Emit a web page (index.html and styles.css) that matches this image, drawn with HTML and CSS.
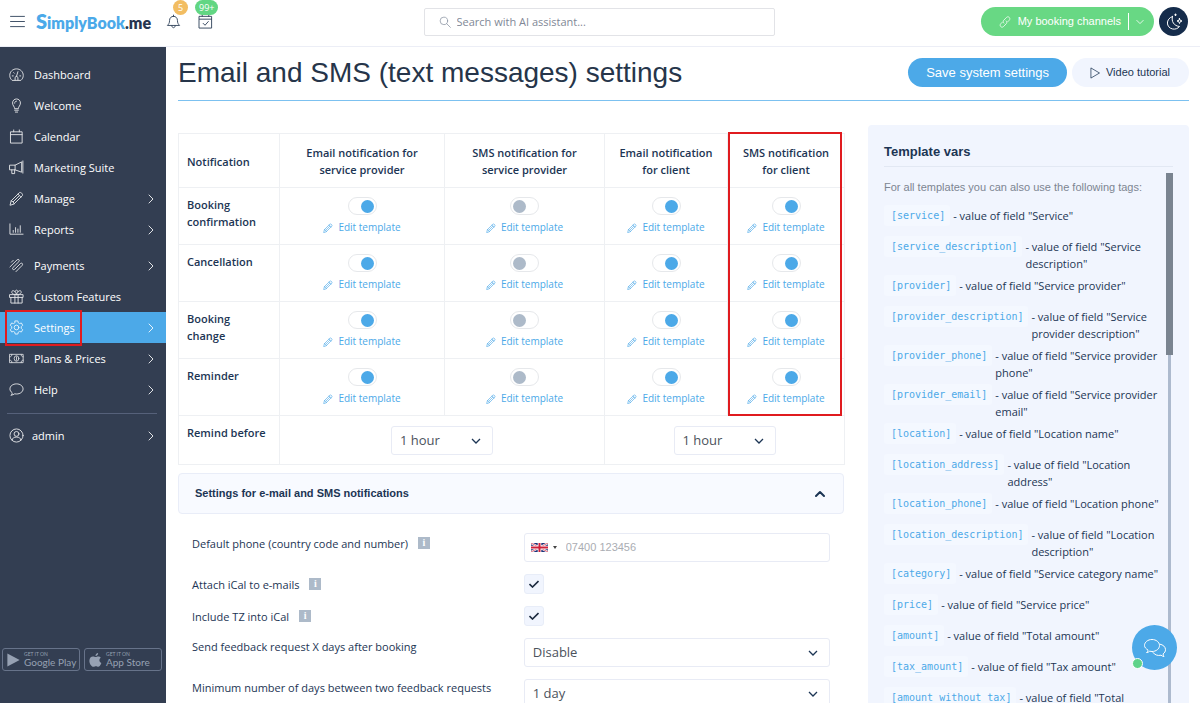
FILE: index.html
```
<!DOCTYPE html>
<html lang="en">
<head>
    <meta charset="UTF-8">
    <meta name="viewport" content="width=device-width, initial-scale=1.0">
    <title>Email and SMS (text messages) settings</title>
    <link rel="stylesheet" href="styles.css">
</head>
<body>
    <svg class="icon-defs" aria-hidden="true">
        <symbol id="i-menu" viewBox="0 0 16 14"><path d="M0.5 1.5h15M0.5 7h15M0.5 12.5h15"/></symbol>
        <symbol id="i-bell" viewBox="0 0 16 16"><path d="M8 1.2v1.2M8 2.4c-2.6 0-4.2 2-4.2 4.4 0 3-1 4-2.3 5.4h13c-1.3-1.4-2.3-2.4-2.3-5.4C12.2 4.4 10.6 2.4 8 2.4zM6.2 12.4c0 1.3.7 2.2 1.8 2.2s1.8-.9 1.8-2.2"/></symbol>
        <symbol id="i-check-cal" viewBox="0 0 16 16"><path d="M1.5 2.5h13v12.500h-13zM1.5 5.5h13M4.500 .5v2M11.500 .5v2M5.500 10l2 2 3.500-4"/></symbol>
        <symbol id="i-search" viewBox="0 0 16 16"><circle cx="6.500" cy="6.500" r="5"/><path d="M10.200 10.200l5 5"/></symbol>
        <symbol id="i-link" viewBox="0 0 16 16"><path d="M6.500 9.500c-1.300-1.300-1.200-2.800-.2-3.800l3.700-3.800c1.100-1.100 2.700-1.100 3.700 0s1 2.600 0 3.700l-2.200 2.200M9.500 6.500c1.300 1.300 1.200 2.800.2 3.800L6 14.100c-1.100 1.100-2.700 1.100-3.700 0s-1-2.600 0-3.700l2.200-2.200"/></symbol>
        <symbol id="i-moon" viewBox="0 0 20 20"><path d="M8.500 4.500c-1.500 4.800 1.500 9.500 7 10-1.600 2-4.200 3-6.800 2.500-6.800-1.300-7.300-10.300-.2-12.500zM15.500 6.500l.7 1.800 1.800.7-1.800.7-.7 1.800-.7-1.800L13 9l1.800-.7zM11.500 2v1.600M10.700 2.800h1.600"/></symbol>
        <symbol id="i-play" viewBox="0 0 16 16"><path d="M3 1.500l11 6.500-11 6.500z"/></symbol>
        <symbol id="i-right" viewBox="0 0 8 10"><path d="M2 1l4 4-4 4"/></symbol>
        <symbol id="i-down" viewBox="0 0 10 8"><path d="M1 2l4 4 4-4"/></symbol>
        <symbol id="i-up" viewBox="0 0 10 8"><path d="M1 6l4-4 4 4"/></symbol>
        <symbol id="i-dashboard" viewBox="0 0 16 16"><path d="M3 14C1.600 12.800.8 11 .8 9c0-4 3.200-7 7.200-7s7.200 3 7.200 7c0 2-.8 3.800-2.200 5zM8 10l1.500-5M3.500 9.500h1M5 6l.6.6M11.500 9.500h1M6.500 14v-2.500c0-2 3-2 3 0V14"/></symbol>
        <symbol id="i-bulb" viewBox="0 0 16 16"><path d="M6 11c0-2-2.200-2.800-2.200-5.700C3.800 2.800 5.700 1 8 1s4.200 1.800 4.200 4.300C12.200 8.200 10 9 10 11zM6 13h4M6.800 15h2.400M6 5.500C6 4.200 6.800 3.300 8 3.300"/></symbol>
        <symbol id="i-calendar" viewBox="0 0 16 16"><path d="M2 3h12v12H2zM2 6h12M5 1v2M11 1v2"/></symbol>
        <symbol id="i-horn" viewBox="0 0 16 16"><path d="M1 5.500h5.500L13.500 2v11l-7-2.500H1zM6.500 5.500v5M3 10.500v4h3v-4M14.800 1v13"/></symbol>
        <symbol id="i-pencil" viewBox="0 0 16 16"><path d="M1.200 14.800l1.100-4.300 8.700-8.700c1.300-1.300 4.500 1.800 3.200 3.200l-8.700 8.700zM9.500 3.300l3.200 3.200M2.300 10.500c1.600.3 2.900 1.600 3.200 3.200M11 5L4.500 11.500"/></symbol>
        <symbol id="i-chart" viewBox="0 0 16 16"><path d="M1 2v11h14M4.500 11V9M7 11V6M9.500 11V7.500M12 11V4"/></symbol>
        <symbol id="i-payments" viewBox="0 0 16 16"><path d="M1 9.500L8.600 2c1.500-1.400 3.300.4 1.900 1.900L4.200 10.200c-1.300 1.400.4 3.100 1.900 1.800l6-6c1.500-1.400 3.300.4 1.900 1.900L7.500 14.500M4.500 2.500L2.500 4.500"/></symbol>
        <symbol id="i-gift" viewBox="0 0 16 16"><path d="M1 6h14v3H1zM2 9v6h12V9M6.300 6v9M9.700 6v9M8 6C6 6 2.500 5.500 3 3s4.300-1 5 3c.7-4 4.500-5.500 5-3S10 6 8 6zM6.500 3c0-2.500 3-2.500 3 0"/></symbol>
        <symbol id="i-gear" viewBox="0 0 16 16"><circle cx="8" cy="8" r="2.500"/><path d="M6.600 1h2.800l.5 2 1.300.8 2-.6 1.400 2.400-1.500 1.500v1.800l1.500 1.500-1.400 2.400-2-.6-1.300.8-.5 2H6.600l-.5-2-1.300-.8-2 .6-1.400-2.400 1.500-1.500V7.100L1.400 5.600l1.400-2.400 2 .6L6.100 3z"/></symbol>
        <symbol id="i-cash" viewBox="0 0 18 14"><path d="M1 2h16v10H1zM1 5c1.500 0 2.500-1 2.500-3M17 5c-1.500 0-2.500-1-2.500-3M1 9c1.500 0 2.500 1 2.500 3M17 9c-1.500 0-2.500 1-2.500 3M9 5v4"/><ellipse cx="9" cy="7" rx="2.800" ry="3.300"/></symbol>
        <symbol id="i-help" viewBox="0 0 16 16"><path d="M2.500 14c.8-.8 1-1.700.8-2.600C1.800 10.300 1 8.900 1 7.400 1 4.300 4.100 2 8 2s7 2.300 7 5.400-3.100 5.400-7 5.400c-.7 0-1.400-.1-2-.2-1 .8-2.100 1.300-3.500 1.400z"/></symbol>
        <symbol id="i-user" viewBox="0 0 16 16"><circle cx="8" cy="8" r="7"/><circle cx="8" cy="6.300" r="2.600"/><path d="M3.300 13c.4-2.500 2-3.300 4.700-3.300s4.300.8 4.700 3.300"/></symbol>
        <symbol id="i-chat" viewBox="0 0 24 20"><path d="M4 14.500c.8-.8 1-1.600.9-2.600C3 10.800 1.500 9.300 1.500 7.500c0-3.300 3.300-6 7.500-6s7.500 2.700 7.500 6-3.300 6-7.500 6c-.8 0-1.600-.1-2.300-.3-.8.7-1.600 1.200-2.700 1.300zM17 6.200c3.200.5 5.500 2.700 5.500 5.500 0 1.700-.9 3.200-2.400 4.200 0 1 .3 1.800.9 2.600-1.200-.1-2.200-.6-3-1.300-3.200.8-6.500-.3-8-2.700"/></symbol>
    </svg>

    <header class="topbar">
        <div class="topbar-left">
            <button class="icon-button" aria-label="Menu"><svg class="icon menu-icon"><use href="#i-menu"/></svg></button>
            <a class="logo" href="#"><span class="logo-blue"><span class="logo-s">S</span>implyBook</span>.me</a>
            <button class="icon-button" aria-label="Notifications"><svg class="icon"><use href="#i-bell"/></svg><span class="badge badge-orange">5</span></button>
            <button class="icon-button" aria-label="Bookings"><svg class="icon"><use href="#i-check-cal"/></svg><span class="badge badge-green">99+</span></button>
        </div>
        <label class="search">
            <svg class="icon search-icon"><use href="#i-search"/></svg>
            <input type="text" placeholder="Search with AI assistant..." aria-label="Search">
        </label>
        <div class="topbar-right">
            <button class="channels"><svg class="icon small-icon"><use href="#i-link"/></svg><span class="channels-text">My booking channels</span><svg class="icon arrow"><use href="#i-down"/></svg></button>
            <button class="theme" aria-label="Dark mode"><svg class="icon"><use href="#i-moon"/></svg></button>
        </div>
    </header>

    <div class="layout">
        <aside class="sidebar">
            <nav>
                <ul class="menu">
                    <li><a href="#"><svg class="icon"><use href="#i-dashboard"/></svg>Dashboard</a></li>
                    <li><a href="#"><svg class="icon"><use href="#i-bulb"/></svg>Welcome</a></li>
                    <li><a href="#"><svg class="icon"><use href="#i-calendar"/></svg>Calendar</a></li>
                    <li><a href="#"><svg class="icon"><use href="#i-horn"/></svg>Marketing Suite</a></li>
                    <li><a href="#"><svg class="icon"><use href="#i-pencil"/></svg>Manage<svg class="icon arrow"><use href="#i-right"/></svg></a></li>
                    <li><a href="#"><svg class="icon"><use href="#i-chart"/></svg>Reports<svg class="icon arrow"><use href="#i-right"/></svg></a></li>
                </ul>
                <ul class="menu menu-second">
                    <li><a href="#"><svg class="icon"><use href="#i-payments"/></svg>Payments<svg class="icon arrow"><use href="#i-right"/></svg></a></li>
                    <li><a href="#"><svg class="icon"><use href="#i-gift"/></svg>Custom Features</a></li>
                    <li class="active"><a href="#"><svg class="icon"><use href="#i-gear"/></svg>Settings<svg class="icon arrow"><use href="#i-right"/></svg></a><span class="mark"></span></li>
                    <li><a href="#"><svg class="icon"><use href="#i-cash"/></svg>Plans &amp; Prices<svg class="icon arrow"><use href="#i-right"/></svg></a></li>
                    <li><a href="#"><svg class="icon"><use href="#i-help"/></svg>Help<svg class="icon arrow"><use href="#i-right"/></svg></a></li>
                </ul>
                <ul class="menu menu-user">
                    <li><a href="#"><svg class="icon"><use href="#i-user"/></svg>admin<svg class="icon arrow"><use href="#i-right"/></svg></a></li>
                </ul>
            </nav>
            <div class="stores">
                <a class="store" href="#">
                    <svg class="store-icon" viewBox="0 0 14 16"><path d="M0 0.500L14 8 0 15.500z"/></svg>
                    <span class="store-text"><small>GET IT ON</small>Google Play</span>
                </a>
                <a class="store" href="#">
                    <svg class="store-icon" viewBox="0 0 14 16"><path d="M10 0c.1 1.800-1.300 3.500-3 3.500C6.800 1.800 8.300.2 10 0zM7.200 4.700c.8 0 1.600-.8 3-.8 1.100 0 2.200.6 2.900 1.600-2.500 1.500-2 5 .6 6-.9 2.300-2.200 4.300-3.600 4.300-1 0-1.400-.6-2.600-.6s-1.700.6-2.600.6C2.700 15.800 0 12.600 0 8.800c0-3.200 2-4.900 4-4.900 1.300 0 2.400.8 3.200.8z"/></svg>
                    <span class="store-text"><small>GET IT ON</small>App Store</span>
                </a>
            </div>
        </aside>

        <main class="content">
            <div class="page-head">
                <h1>Email and SMS (text messages) settings</h1>
                <button class="btn btn-save">Save system settings</button>
                <button class="btn btn-video"><svg class="icon small-icon"><use href="#i-play"/></svg>Video tutorial</button>
            </div>

            <div class="columns">
                <section class="settings">
                    <div class="table-wrap">
                        <table>
                            <colgroup>
                                <col class="c-name"><col class="c-email-p"><col class="c-sms-p"><col class="c-email-c"><col class="c-sms-c">
                            </colgroup>
                            <thead>
                                <tr>
                                    <th scope="col">Notification</th>
                                    <th scope="col">Email notification for service provider</th>
                                    <th scope="col">SMS notification for service provider</th>
                                    <th scope="col">Email notification for client</th>
                                    <th scope="col">SMS notification for client</th>
                                </tr>
                            </thead>
                            <tbody>
                                <tr>
                                    <th scope="row">Booking confirmation</th>
                                    <td><input class="toggle" type="checkbox" aria-label="Booking confirmation, email for provider" checked><a class="edit" href="#"><svg class="icon"><use href="#i-pencil"/></svg>Edit template</a></td>
                                    <td><input class="toggle" type="checkbox" aria-label="Booking confirmation, SMS for provider"><a class="edit" href="#"><svg class="icon"><use href="#i-pencil"/></svg>Edit template</a></td>
                                    <td><input class="toggle" type="checkbox" aria-label="Booking confirmation, email for client" checked><a class="edit" href="#"><svg class="icon"><use href="#i-pencil"/></svg>Edit template</a></td>
                                    <td><input class="toggle" type="checkbox" aria-label="Booking confirmation, SMS for client" checked><a class="edit" href="#"><svg class="icon"><use href="#i-pencil"/></svg>Edit template</a></td>
                                </tr>
                                <tr>
                                    <th scope="row">Cancellation</th>
                                    <td><input class="toggle" type="checkbox" aria-label="Cancellation, email for provider" checked><a class="edit" href="#"><svg class="icon"><use href="#i-pencil"/></svg>Edit template</a></td>
                                    <td><input class="toggle" type="checkbox" aria-label="Cancellation, SMS for provider"><a class="edit" href="#"><svg class="icon"><use href="#i-pencil"/></svg>Edit template</a></td>
                                    <td><input class="toggle" type="checkbox" aria-label="Cancellation, email for client" checked><a class="edit" href="#"><svg class="icon"><use href="#i-pencil"/></svg>Edit template</a></td>
                                    <td><input class="toggle" type="checkbox" aria-label="Cancellation, SMS for client" checked><a class="edit" href="#"><svg class="icon"><use href="#i-pencil"/></svg>Edit template</a></td>
                                </tr>
                                <tr>
                                    <th scope="row">Booking<br>change</th>
                                    <td><input class="toggle" type="checkbox" aria-label="Booking change, email for provider" checked><a class="edit" href="#"><svg class="icon"><use href="#i-pencil"/></svg>Edit template</a></td>
                                    <td><input class="toggle" type="checkbox" aria-label="Booking change, SMS for provider"><a class="edit" href="#"><svg class="icon"><use href="#i-pencil"/></svg>Edit template</a></td>
                                    <td><input class="toggle" type="checkbox" aria-label="Booking change, email for client" checked><a class="edit" href="#"><svg class="icon"><use href="#i-pencil"/></svg>Edit template</a></td>
                                    <td><input class="toggle" type="checkbox" aria-label="Booking change, SMS for client" checked><a class="edit" href="#"><svg class="icon"><use href="#i-pencil"/></svg>Edit template</a></td>
                                </tr>
                                <tr>
                                    <th scope="row">Reminder</th>
                                    <td><input class="toggle" type="checkbox" aria-label="Reminder, email for provider" checked><a class="edit" href="#"><svg class="icon"><use href="#i-pencil"/></svg>Edit template</a></td>
                                    <td><input class="toggle" type="checkbox" aria-label="Reminder, SMS for provider"><a class="edit" href="#"><svg class="icon"><use href="#i-pencil"/></svg>Edit template</a></td>
                                    <td><input class="toggle" type="checkbox" aria-label="Reminder, email for client" checked><a class="edit" href="#"><svg class="icon"><use href="#i-pencil"/></svg>Edit template</a></td>
                                    <td><input class="toggle" type="checkbox" aria-label="Reminder, SMS for client" checked><a class="edit" href="#"><svg class="icon"><use href="#i-pencil"/></svg>Edit template</a></td>
                                </tr>
                                <tr>
                                    <th scope="row">Remind before</th>
                                    <td colspan="2"><select class="select select-small" aria-label="Remind provider before"><option>1 hour</option></select></td>
                                    <td colspan="2"><select class="select select-small" aria-label="Remind client before"><option>1 hour</option></select></td>
                                </tr>
                            </tbody>
                        </table>
                        <span class="mark"></span>
                    </div>

                    <button class="accordion">Settings for e-mail and SMS notifications<svg class="icon arrow"><use href="#i-up"/></svg></button>

                    <form class="form">
                        <label class="info-label" for="phone">Default phone (country code and number) <span class="info">i</span></label>
                        <div class="phone">
                            <button type="button" class="country" aria-label="United Kingdom">
                                <svg class="flag" viewBox="0 0 17 9">
                                    <path fill="#1d3278" d="M0 0h17v9H0z"/>
                                    <path stroke="#fff" stroke-width="2" d="M0 0l17 9M17 0L0 9"/>
                                    <path stroke="#d0203a" stroke-width="0.700" d="M0 0l17 9M17 0L0 9"/>
                                    <path stroke="#fff" stroke-width="3.600" d="M8.500 0v9M0 4.500h17"/>
                                    <path stroke="#d0203a" stroke-width="2" d="M8.500 0v9M0 4.500h17"/>
                                </svg>
                                <span class="caret"></span>
                            </button>
                            <input type="tel" id="phone" placeholder="07400 123456">
                        </div>
                        <label class="info-label" for="ical">Attach iCal to e-mails <span class="info">i</span></label>
                        <input class="check" type="checkbox" id="ical" checked>
                        <label class="info-label" for="tz">Include TZ into iCal <span class="info">i</span></label>
                        <input class="check" type="checkbox" id="tz" checked>
                        <label for="feedback">Send feedback request X days after booking</label>
                        <select class="select" id="feedback"><option>Disable</option></select>
                        <label for="days">Minimum number of days between two feedback requests</label>
                        <select class="select" id="days"><option>1 day</option></select>
                    </form>
                </section>

                <aside class="vars">
                    <h2>Template vars</h2>
                    <div class="vars-body">
                        <div class="vars-scroll">
                            <p>For all templates you can also use the following tags:</p>
                            <ul>
                                <li><code>[service]</code><span>- value of field "Service"</span></li>
                                <li><code>[service_description]</code><span>- value of field "Service description"</span></li>
                                <li><code>[provider]</code><span>- value of field "Service provider"</span></li>
                                <li><code>[provider_description]</code><span>- value of field "Service provider description"</span></li>
                                <li><code>[provider_phone]</code><span>- value of field "Service provider phone"</span></li>
                                <li><code>[provider_email]</code><span>- value of field "Service provider email"</span></li>
                                <li><code>[location]</code><span>- value of field "Location name"</span></li>
                                <li><code>[location_address]</code><span>- value of field "Location address"</span></li>
                                <li><code>[location_phone]</code><span>- value of field "Location phone"</span></li>
                                <li><code>[location_description]</code><span>- value of field "Location description"</span></li>
                                <li><code>[category]</code><span>- value of field "Service category name"</span></li>
                                <li><code>[price]</code><span>- value of field "Service price"</span></li>
                                <li><code>[amount]</code><span>- value of field "Total amount"</span></li>
                                <li><code>[tax_amount]</code><span>- value of field "Tax amount"</span></li>
                                <li><code>[amount_without_tax]</code><span>- value of field "Total</span></li>
                            </ul>
                        </div>
                        <div class="scrollbar"><div class="thumb"></div></div>
                    </div>
                </aside>
            </div>
        </main>
    </div>

    <button class="chat" aria-label="Chat"><svg class="icon"><use href="#i-chat"/></svg><span class="online"></span></button>
</body>
</html>
```
FILE: styles.css
```
* {
    box-sizing: border-box;
}
body {
    display: flex;
    flex-direction: column;
    height: 100vh;
    margin: 0;
    overflow: hidden;
    font-family: "Open Sans", sans-serif;
    font-size: 11px;
    line-height: 17px;
    color: #1c3554;
    background: #fff;
}
button, input, select {
    font: inherit;
    color: inherit;
}
button {
    padding: 0;
    border: none;
    background: none;
    cursor: pointer;
}
a {
    color: inherit;
    text-decoration: none;
}
ul {
    margin: 0;
    padding: 0;
    list-style: none;
}
.icon-defs {
    position: absolute;
    width: 0;
    height: 0;
}
.icon {
    flex: none;
    width: 15px;
    height: 15px;
    fill: none;
    stroke: currentColor;
    stroke-width: 1;
    stroke-linecap: round;
    stroke-linejoin: round;
}
.icon.small-icon {
    width: 12px;
    height: 12px;
}
.icon.arrow {
    width: 10px;
    height: 10px;
    stroke-width: 2;
}
.mark {
    position: absolute;
    border: 2px solid #e01b1f;
    pointer-events: none;
}

/* top bar */
.topbar {
    display: flex;
    flex: none;
    align-items: center;
    height: 47px;
    padding: 0 12px 3px 10px;
    border-bottom: 1px solid #eceef6;
}
.topbar-left, .topbar-right {
    display: flex;
    flex: 1;
    align-items: center;
}
.topbar-right {
    justify-content: flex-end;
    gap: 5px;
}
.icon-button {
    position: relative;
    display: flex;
    color: #34465e;
}
.icon-button + .icon-button {
    margin-left: 17px;
}
.icon.menu-icon {
    height: 13px;
}
.logo {
    margin: 0 15px 0 11px;
    font-family: Lato, sans-serif;
    font-size: 16px;
    font-weight: 800;
    line-height: 22px;
    color: #26354f;
}
.logo-blue {
    color: #4ba9e9;
}
.logo-s {
    font-size: 20px;
}
.badge {
    position: absolute;
    left: 7px;
    bottom: 14px;
    min-width: 15px;
    height: 15px;
    border-radius: 8px;
    font-size: 9px;
    line-height: 15px;
    color: #fff;
    text-align: center;
}
.badge-orange {
    background: #f2bd62;
}
.badge-green {
    left: -3px;
    padding: 0 4px;
    background: #62d683;
}
.search {
    display: flex;
    flex: 0 1 351px;
    align-items: center;
    gap: 6px;
    height: 28px;
    padding: 0 14px;
    border: 1px solid #e2e3e7;
    border-radius: 2px;
    color: #8a93a1;
}
.icon.search-icon {
    width: 12px;
    height: 12px;
}
.search input {
    flex: 1;
    min-width: 0;
    padding: 0;
    border: none;
    outline: none;
    background: none;
}
.search input::placeholder {
    color: #7f8896;
}
.channels {
    display: flex;
    align-items: center;
    height: 29px;
    padding: 0 10px 0 18px;
    border-radius: 15px;
    background: #68d884;
    font-family: "Liberation Sans", sans-serif;
    color: #fff;
}
.channels-text {
    margin-left: 7px;
    margin-right: 7px;
    padding-right: 7px;
    border-right: 1px solid #fff;
}
.channels .arrow {
    width: 8px;
    stroke-width: 1;
}
.theme {
    display: flex;
    align-items: center;
    justify-content: center;
    width: 29px;
    height: 29px;
    border-radius: 50%;
    background: #152c4b;
    color: #fff;
}
.theme .icon {
    width: 20px;
    height: 20px;
}

/* sidebar */
.layout {
    display: flex;
    flex: 1;
    min-height: 0;
}
.sidebar {
    display: flex;
    flex: none;
    flex-direction: column;
    justify-content: space-between;
    width: 166px;
    padding: 12px 0 32px;
    background: #333e52;
    color: #fff;
}
.menu li {
    position: relative;
}
.menu a {
    display: flex;
    align-items: center;
    gap: 10px;
    padding: 7px 10px 7px 9px;
}
.menu .icon {
    opacity: 0.85;
}
.menu .arrow {
    margin-left: auto;
    stroke-width: 1;
}
.menu-second {
    margin-top: 5px;
}
.menu .active {
    background: #4ca9e8;
}
.menu .mark {
    top: -2px;
    left: 5px;
    width: 77px;
    height: 36px;
}
.menu-user {
    margin: 8px 9px 0 7px;
    padding-top: 6px;
    border-top: 1px solid #56617a;
}
.menu-user a {
    gap: 8px;
    padding: 7px 1px 7px 2px;
}
.stores {
    display: flex;
    gap: 4px;
    padding: 0 4px 0 2px;
}
.store {
    display: flex;
    flex: 1;
    align-items: center;
    gap: 4px;
    height: 23px;
    padding-left: 4px;
    border: 1px solid #67738a;
    border-radius: 3px;
    color: #96a1b3;
}
.store-icon {
    width: 13px;
    height: 14px;
    fill: #96a1b3;
}
.store-text {
    font-family: Lato, sans-serif;
    font-size: 10px;
    line-height: 11px;
    white-space: nowrap;
}
.store-text small {
    display: block;
    font-size: 5px;
    line-height: 6px;
}

/* page */
.content {
    flex: 1;
    min-width: 0;
    padding: 0 11px 0 12px;
    overflow: hidden;
}
.page-head {
    display: flex;
    align-items: center;
    height: 54px;
    padding-bottom: 2px;
    border-bottom: 1px solid #7cc1f0;
}
h1 {
    flex: 1;
    margin: 0;
    font-family: "Liberation Sans", sans-serif;
    font-size: 28px;
    font-weight: normal;
    line-height: 32px;
    color: #26354a;
    white-space: nowrap;
}
.btn {
    display: flex;
    align-items: center;
    gap: 5px;
    height: 29px;
    border-radius: 15px;
    font-family: "Liberation Sans", sans-serif;
}
.btn-save {
    padding: 0 18px;
    background: #4ca9e8;
    font-size: 13px;
    color: #fff;
}
.btn-video {
    margin-left: 5px;
    padding: 0 19px 0 17px;
    background: #f1f5fe;
}
.columns {
    display: grid;
    grid-template-columns: minmax(0, 1fr) 321px;
    gap: 24px;
    padding-top: 24px;
}
.settings {
    padding-top: 8px;
}
.table-wrap {
    position: relative;
}
.table-wrap .mark {
    top: -1px;
    right: 2px;
    bottom: 49px;
    width: 114px;
}
table {
    width: 100%;
    table-layout: fixed;
    border-collapse: collapse;
}
.c-name {
    width: 101px;
}
.c-email-p {
    width: 165px;
}
.c-sms-p {
    width: 160px;
}
.c-email-c {
    width: 123px;
}
.c-sms-c {
    width: 117px;
}
th, td {
    padding: 9px 8px 8px;
    border: 1px solid #eef0f3;
    font-weight: 600;
    text-align: center;
    vertical-align: top;
}
tbody th {
    padding-top: 8px;
}
thead th {
    padding: 10px 8px 9px;
    vertical-align: middle;
}
thead th:nth-child(2), thead th:nth-child(3) {
    padding-left: 20px;
    padding-right: 20px;
}
th:first-child {
    text-align: left;
}
td {
    font-weight: normal;
}
.toggle {
    display: block;
    width: 29px;
    height: 18px;
    margin: 0 auto 4px;
    padding: 2px;
    border: 1px solid #e6e8eb;
    border-radius: 9px;
    background: #fff;
    appearance: none;
}
.toggle::before {
    content: "";
    display: block;
    width: 13px;
    height: 13px;
    border-radius: 50%;
    background: #adbac9;
}
.toggle:checked::before {
    margin-left: 10px;
    background: #4ca9e8;
}
.edit {
    display: flex;
    align-items: center;
    justify-content: center;
    gap: 5px;
    font-size: 10px;
    color: #4ca9e8;
}
.edit .icon {
    width: 10px;
    height: 10px;
}
.select {
    display: block;
    width: 100%;
    height: 29px;
    padding: 0 8px;
    border: 1px solid #e8ebf5;
    border-radius: 3px;
    background: #fff url("data:image/svg+xml,%3Csvg xmlns='http://www.w3.org/2000/svg' viewBox='0 0 10 8' fill='none' stroke='%231c3554' stroke-width='1.300'%3E%3Cpath d='M1 2l4 4 4-4'/%3E%3C/svg%3E") no-repeat right 11px center / 10px 8px;
    font-size: 13px;
    color: #4b525c;
    appearance: none;
}
.select-small {
    width: 102px;
    margin: 1px auto;
}
.accordion {
    display: flex;
    align-items: center;
    justify-content: space-between;
    width: 100%;
    height: 41px;
    margin-top: 8px;
    padding: 0 18px 0 16px;
    border: 1px solid #e9edf8;
    border-radius: 4px;
    background: #f8faff;
    font-family: "Liberation Sans", sans-serif;
    font-weight: bold;
}
.form {
    display: grid;
    grid-template-columns: 52fr 48fr;
    align-items: start;
    gap: 12px 0;
    padding: 19px 14px;
}
.info-label {
    display: flex;
    align-items: center;
    height: 20px;
}
.info {
    width: 12px;
    height: 12px;
    margin-left: 10px;
    background: #adbac9;
    font-family: "Liberation Serif", serif;
    font-size: 10px;
    font-weight: bold;
    line-height: 12px;
    color: #fff;
    text-align: center;
}
.phone {
    display: flex;
    align-items: center;
    height: 29px;
    border: 1px solid #e8ebf5;
    border-radius: 3px;
}
.country {
    display: flex;
    align-items: center;
    gap: 5px;
    padding: 0 9px 0 6px;
}
.flag {
    width: 17px;
    height: 9px;
}
.caret {
    border: 2px solid transparent;
    border-top: 3px solid #444;
    border-bottom: 0;
}
.phone input {
    flex: 1;
    min-width: 0;
    padding: 0;
    border: none;
    outline: none;
    font-family: "Liberation Sans", sans-serif;
}
.phone input::placeholder {
    color: #aaadb3;
}
.check {
    width: 20px;
    height: 20px;
    margin: 0;
    border: 1px solid #e8edf8;
    border-radius: 3px;
    background: #f1f5fe;
    appearance: none;
}
.check:checked {
    background: #f1f5fe url("data:image/svg+xml,%3Csvg xmlns='http://www.w3.org/2000/svg' viewBox='0 0 10 8' fill='none' stroke='%231c2b40' stroke-width='1.600'%3E%3Cpath d='M0.500 4l3 3 6-6'/%3E%3C/svg%3E") no-repeat center / 10px 8px;
}

/* template vars */
.vars {
    height: 100vh;
    padding: 16px;
    border-radius: 4px;
    background: #f1f5fe;
}
h2 {
    margin: 0;
    padding: 2px 0 6px;
    border-bottom: 1px solid #e2e8f3;
    font-family: "Liberation Sans", sans-serif;
    font-size: 13px;
    line-height: 17px;
}
.vars-body {
    display: flex;
    padding-top: 6px;
}
.vars-scroll {
    flex: 1;
    min-width: 0;
}
.vars p {
    margin: 6px 0 9px;
    font-family: "Liberation Sans", sans-serif;
    color: #7d8592;
    white-space: nowrap;
}
.vars li {
    display: flex;
    align-items: flex-start;
    gap: 3px;
}
.vars code {
    margin-bottom: 10px;
    padding: 0 5px 0 7px;
    border-radius: 3px;
    background: #f4f8ff;
    font-family: "DejaVu Sans Mono", monospace;
    font-size: 10px;
    line-height: 21px;
    color: #4ca9e8;
}
.vars li span {
    padding: 2px 0 3px;
}
.scrollbar {
    width: 7px;
    height: 100vh;
    background: linear-gradient(#adbace, #adbace) no-repeat center / 3px 100%;
}
.thumb {
    height: 182px;
    background: #7a8490;
}

/* chat */
.chat {
    position: fixed;
    right: 23px;
    bottom: 33px;
    display: flex;
    align-items: center;
    justify-content: center;
    width: 45px;
    height: 45px;
    border-radius: 50%;
    background: #4ca9e8;
    color: #fff;
}
.chat .icon {
    width: 24px;
    height: 20px;
}
.online {
    position: absolute;
    left: 0;
    bottom: 1px;
    width: 11px;
    height: 11px;
    border: 1px solid #fff;
    border-radius: 50%;
    background: #5fd38a;
}
```
